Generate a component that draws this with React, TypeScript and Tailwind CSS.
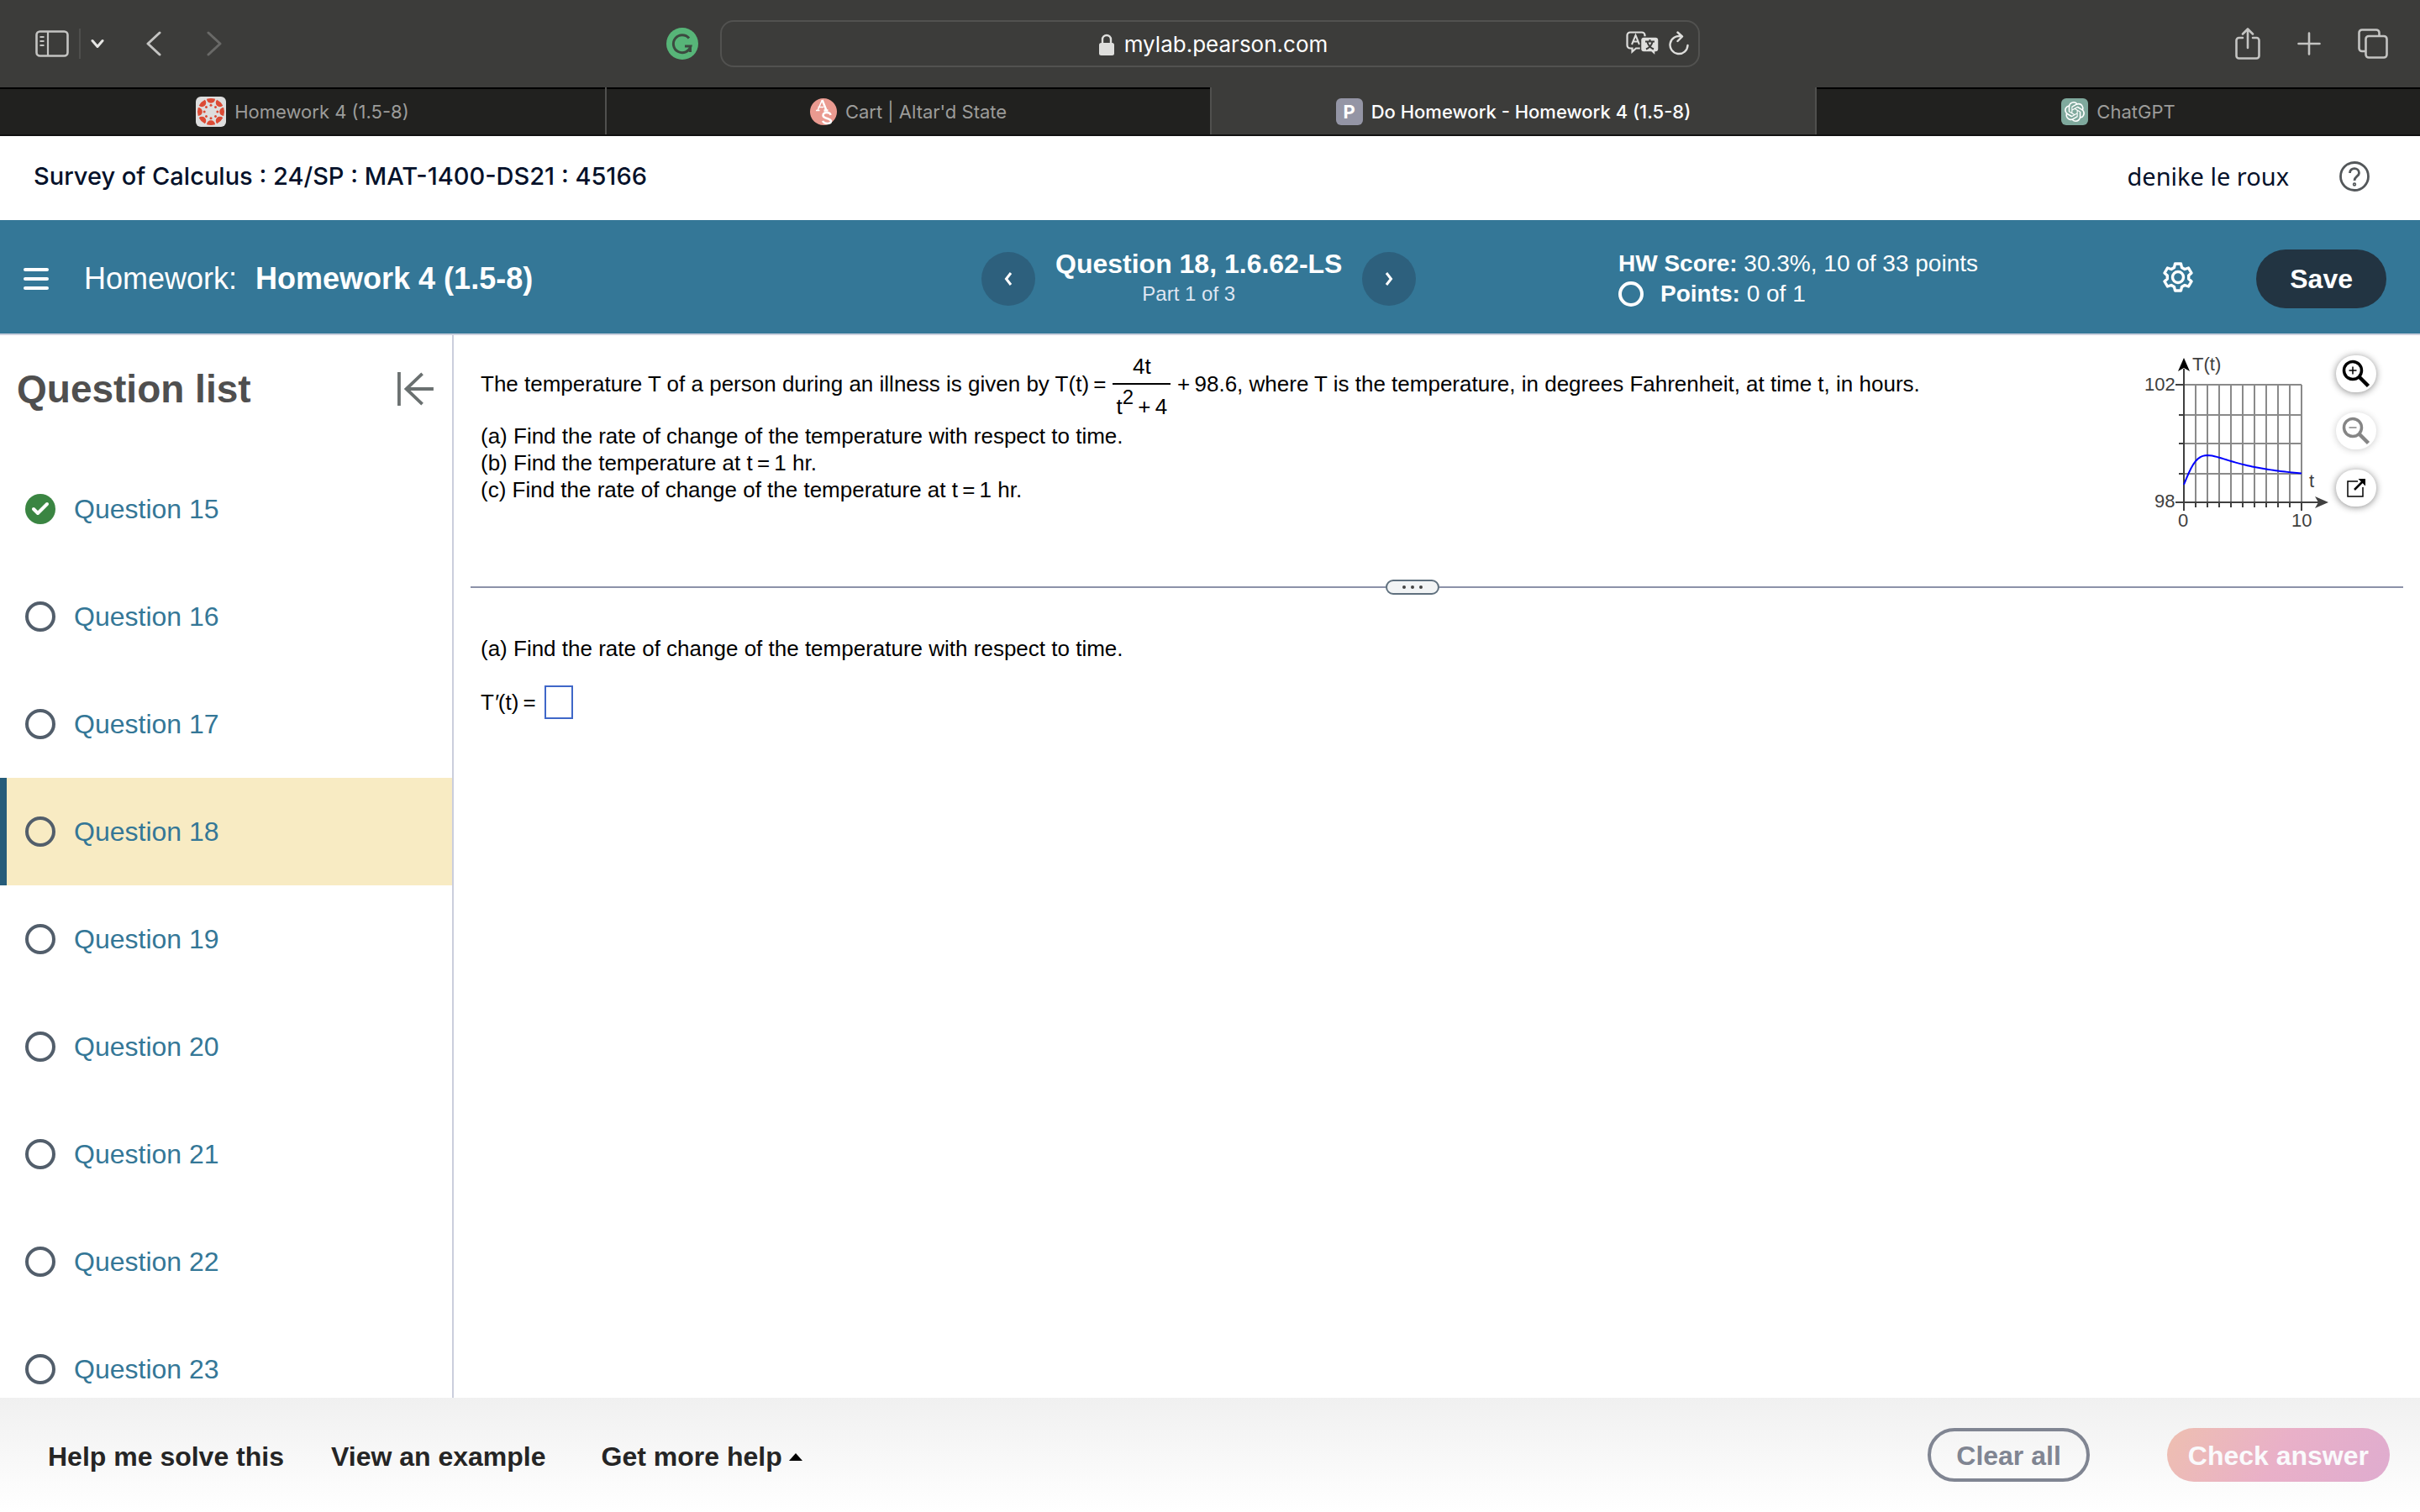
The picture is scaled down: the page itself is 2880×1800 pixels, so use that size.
import { useState } from "react";
import type { ReactNode } from "react";
import { Check } from "lucide-react";
import { SiOpenai } from "react-icons/si";

const questions = [15, 16, 17, 18, 19, 20, 21, 22, 23];

const CanvasIcon = () => (
  <svg viewBox="0 0 36 36" className="h-9 w-9">
    <rect width="36" height="36" rx="6" fill="#dedede" />
    {[0, 45, 90, 135, 180, 225, 270, 315].map((angle) => (
      <g key={angle} transform={`rotate(${angle} 18 18)`} fill="#dc4b35">
        <path d="M13 2.8a16 16 0 0 1 10 0a5 5 0 0 1-10 0z" />
        <circle cx="18" cy="10.2" r="1.5" />
      </g>
    ))}
  </svg>
);

const AltarIcon = () => (
  <svg viewBox="0 0 32 32" className="h-8 w-8">
    <circle cx="16" cy="16" r="16" fill="#ea9a90" />
    <path d="M7 14.500h4.500M9 14.500L14.500 2M9.500 10.500h6.500" fill="none" stroke="#fff" strokeWidth="1.500" />
    <path d="M14.500 2l5 12.500M16.500 14.500h5" fill="none" stroke="#fff" strokeWidth="2.500" />
    <path d="M24.500 20c-.5-3.500-9-4.500-9 .5 0 4 9.500 3 9.500 7 0 3.500-8 3.500-10-.5" fill="none" stroke="#fff" strokeWidth="2.500" />
  </svg>
);

const PearsonIcon = () => (
  <span className="flex h-8 w-8 items-center justify-center rounded-md bg-[#9495a5] text-[22px] leading-8 font-bold text-white">P</span>
);

const ChatIcon = () => (
  <span className="flex h-8 w-8 items-center justify-center rounded-md bg-[#7fa99d]">
    <SiOpenai className="h-6 w-6 text-white" />
  </span>
);

const tabs: { title: string; icon: ReactNode; active?: boolean }[] = [
  { title: "Homework 4 (1.5-8)", icon: <CanvasIcon /> },
  { title: "Cart | Altar'd State", icon: <AltarIcon /> },
  { title: "Do Homework - Homework 4 (1.5-8)", icon: <PearsonIcon />, active: true },
  { title: "ChatGPT", icon: <ChatIcon /> },
];

const BrowserToolbar = () => (
  <div className="grid h-[104px] shrink-0 grid-cols-[1fr_1166px_1fr] items-center bg-[#3c3c3a] text-[#c4c4c2]">
    <div className="flex items-center pl-[42px]">
      <button aria-label="Show sidebar">
        <svg viewBox="0 0 40 32" className="h-8 w-10" fill="none" stroke="currentColor" strokeWidth="2.6">
          <rect x="1.500" y="1.500" width="37" height="29" rx="4" />
          <path d="M15 2v28M5.500 8h5M5.500 13h5M5.500 18h5" strokeWidth="2.200" />
        </svg>
      </button>
      <span className="ml-3 h-9 w-0.5 bg-[#4f4f4d]" />
      <button aria-label="Tab groups" className="ml-3">
        <svg viewBox="0 0 16 12" className="h-3 w-4" fill="none" stroke="#e6e6e4" strokeWidth="3" strokeLinecap="round" strokeLinejoin="round">
          <path d="M2 2.500l6 7 6-7" />
        </svg>
      </button>
      <button aria-label="Back" className="ml-[50px]">
        <svg viewBox="0 0 18 30" className="h-[30px] w-[18px]" fill="none" stroke="currentColor" strokeWidth="3" strokeLinecap="round" strokeLinejoin="round">
          <path d="M16 2L2 15l14 13" />
        </svg>
      </button>
      <button aria-label="Forward" className="ml-[54px] text-[#696967]">
        <svg viewBox="0 0 18 30" className="h-[30px] w-[18px]" fill="none" stroke="currentColor" strokeWidth="3" strokeLinecap="round" strokeLinejoin="round">
          <path d="M2 2l14 13L2 28" />
        </svg>
      </button>
      <button aria-label="Grammarly" className="mr-[26px] ml-auto">
        <svg viewBox="0 0 38 38" className="h-[38px] w-[38px]">
          <circle cx="19" cy="19" r="19" fill="#57b578" />
          <path d="M27 12.500a10.500 10.500 0 1 0 2 9.500h-7M28.500 21.500v7.500" fill="none" stroke="#3c4a40" strokeWidth="3" />
        </svg>
      </button>
    </div>
    <div className="flex h-14 items-center rounded-2xl border-2 border-[#525250] px-2.5">
      <div className="flex flex-1 items-center justify-center gap-3 pt-0.5 pl-[84px]">
        <svg viewBox="0 0 18 26" className="h-[26px] w-[18px]" fill="#dededc">
          <rect y="11" width="18" height="15" rx="2.500" />
          <path d="M4 12V7a5 5 0 0 1 10 0v5" fill="none" stroke="#dededc" strokeWidth="2.400" />
        </svg>
        <span className="text-[26px] leading-8 text-white">mylab.pearson.com</span>
      </div>
      <button aria-label="Translate">
        <svg viewBox="0 0 40 30" className="h-[30px] w-10">
          <path
            d="M5 1.500h14a3.500 3.500 0 0 1 3.500 3.500v12a3.500 3.500 0 0 1-3.500 3.500h-7l-4.500 4v-4H5A3.500 3.500 0 0 1 1.500 17V5A3.500 3.500 0 0 1 5 1.500z"
            fill="none"
            stroke="#dededc"
            strokeWidth="2.200"
          />
          <path d="M7 16L11.500 5 16 16M8.500 12.500h6" fill="none" stroke="#dededc" strokeWidth="2" />
          <path
            d="M21 7h14.500A3.500 3.500 0 0 1 39 10.500v11a3.500 3.500 0 0 1-3.500 3.500H35v4.500L30 25h-9a3.500 3.500 0 0 1-3.500-3.500v-11A3.500 3.500 0 0 1 21 7z"
            fill="#dededc"
            stroke="#3c3c3a"
            strokeWidth="1.500"
          />
          <path d="M23 12.500h11M28.500 10v2.500M31.500 13c-1 4-4 7-7.500 8.500M25.500 13c1 4 4 7 7.500 8.500" fill="none" stroke="#3c3c3a" strokeWidth="2" />
        </svg>
      </button>
      <button aria-label="Reload" className="ml-2.5">
        <svg viewBox="0 0 26 30" className="h-[30px] w-[26px]" fill="none" stroke="#dededc" strokeWidth="2.400" strokeLinecap="round" strokeLinejoin="round">
          <path d="M16 6.500A10.500 10.500 0 1 0 23.500 17M11.500 1.500l5.500 5-5.500 5.500" />
        </svg>
      </button>
    </div>
    <div className="flex items-center justify-end gap-11 pr-[38px]">
      <button aria-label="Share">
        <svg viewBox="0 0 30 38" className="h-[38px] w-[30px]" fill="none" stroke="currentColor" strokeWidth="2.600" strokeLinecap="round" strokeLinejoin="round">
          <path d="M9 12H4.500A3 3 0 0 0 1.500 15v18.500a3 3 0 0 0 3 3h21a3 3 0 0 0 3-3V15a3 3 0 0 0-3-3H21M15 24V2M9 7.500L15 1.500l6 6" />
        </svg>
      </button>
      <button aria-label="New tab">
        <svg viewBox="0 0 28 28" className="h-7 w-7" fill="none" stroke="currentColor" strokeWidth="2.600" strokeLinecap="round">
          <path d="M14 1.500v25M1.500 14h25" />
        </svg>
      </button>
      <button aria-label="Tab overview">
        <svg viewBox="0 0 36 36" className="h-9 w-9" fill="none" stroke="currentColor" strokeWidth="2.600">
          <path d="M9.500 27H5a3.500 3.500 0 0 1-3.500-3.500V5A3.500 3.500 0 0 1 5 1.500h17A3.500 3.500 0 0 1 25.500 5v4" />
          <rect x="9.500" y="9" width="25" height="25.500" rx="3.500" />
        </svg>
      </button>
    </div>
  </div>
);

const TabBar = () => (
  <div className="grid h-[58px] shrink-0 grid-cols-4 border-b-2 border-[#111]">
    {tabs.map((tab) => (
      <button
        key={tab.title}
        className={`flex items-center justify-center gap-2.5 border-l-2 border-[#50504e] pt-0.5 text-[22px] leading-7 first:border-l-0 ${
          tab.active ? "bg-[#3c3c3a] font-medium text-white" : "bg-[#21211f] text-[#9c9c9a] shadow-[inset_0_2px_0_#000]"
        }`}
      >
        {tab.icon}
        {tab.title}
      </button>
    ))}
  </div>
);

const CourseHeader = () => (
  <header className="flex h-[100px] shrink-0 items-center justify-between bg-white pr-[60px] pb-1 pl-10 text-[#05112a]">
    <h1 className="text-[29px] leading-9 font-medium">Survey of Calculus : 24/SP : MAT-1400-DS21 : 45166</h1>
    <div className="flex items-center gap-[60px]">
      <span className="font-['Noto_Sans',sans-serif] text-[29px] leading-9">denike le roux</span>
      <button aria-label="Help">
        <svg viewBox="0 0 36 36" className="h-9 w-9" fill="none" stroke="#53575a" strokeWidth="2.800">
          <circle cx="18" cy="18" r="16.500" />
          <path d="M12.500 14c0-7.500 11-7 11 0 0 4-5.500 4-5.500 9" />
          <circle cx="18" cy="27.500" r="0.800" />
        </svg>
      </button>
    </div>
  </header>
);

const RoundButton = ({ label, d }: { label: string; d: string }) => (
  <button aria-label={label} className="flex h-16 w-16 items-center justify-center rounded-full bg-[#2d607d]">
    <svg viewBox="0 0 10 16" className="h-4 w-2.5" fill="none" stroke="#fff" strokeWidth="3">
      <path d={d} />
    </svg>
  </button>
);

const AssignmentBar = () => (
  <div className="grid h-[137px] shrink-0 grid-cols-[1168fr_758fr_648fr_306fr] items-center border-b-2 border-[#cbd0de] bg-[#347797] pt-1 font-['Liberation_Sans',Arial,sans-serif] text-white">
    <div className="flex items-center pl-7">
      <button aria-label="Menu" className="flex flex-col gap-[7px]">
        <span className="h-1 w-[30px] rounded-sm bg-white" />
        <span className="h-1 w-[30px] rounded-sm bg-white" />
        <span className="h-1 w-[30px] rounded-sm bg-white" />
      </button>
      <span className="ml-[42px] text-[36px] leading-10">Homework:</span>
      <span className="ml-[22px] text-[36px] leading-10 font-bold">Homework 4 (1.5-8)</span>
    </div>
    <div className="flex items-center gap-6">
      <RoundButton label="Previous question" d="M8 1L2.500 8 8 15" />
      <div className="pb-1 text-center">
        <div className="text-[32px] leading-10 font-bold">Question 18, 1.6.62-LS</div>
        <div className="pr-6 text-2xl leading-8 text-[#dfe6f2]">Part 1 of 3</div>
      </div>
      <RoundButton label="Next question" d="M2 1l5.500 7L2 15" />
    </div>
    <div className="text-[28px] leading-9">
      <div>
        <b>HW Score:</b> 30.3%, 10 of 33 points
      </div>
      <div className="flex items-center gap-5">
        <span className="h-[30px] w-[30px] rounded-full border-4 border-white" />
        <span>
          <b>Points:</b> 0 of 1
        </span>
      </div>
    </div>
    <div className="flex items-center justify-between pr-10">
      <button aria-label="Settings" className="pb-1">
        <svg viewBox="0 0 36 36" className="h-9 w-9" fill="none" stroke="#fff" strokeWidth="3.400" strokeLinejoin="round">
          <path d="M14.500 2h7l1 4.500 3.500 2 4.500-1.500 3.500 6-3.300 3v4l3.300 3-3.500 6-4.500-1.500-3.500 2-1 4.500h-7l-1-4.500-3.500-2L5.500 29 2 23l3.300-3v-4L2 13l3.500-6L10 8.500l3.500-2z" />
          <circle cx="18" cy="18" r="6.500" />
        </svg>
      </button>
      <button className="h-[70px] rounded-full bg-[#223442] px-10 text-[32px] leading-10 font-bold">Save</button>
    </div>
  </div>
);

const QuestionList = ({ active, onSelect }: { active: number; onSelect: (question: number) => void }) => (
  <aside className="w-[540px] shrink-0 overflow-hidden border-r-2 border-[#cbcedd]">
    <div className="flex h-[143px] items-start justify-between pt-10 pr-[22px] pl-5">
      <h2 className="text-[46px] leading-[48px] font-bold text-[#4f4f4f]">Question list</h2>
      <button aria-label="Collapse question list" className="pt-1">
        <svg viewBox="0 0 46 42" className="h-10 w-11" fill="none" stroke="#6a7070" strokeWidth="4">
          <path d="M3 0v42M46 21H13M32 2L12 21l20 19" />
        </svg>
      </button>
    </div>
    <ul>
      {questions.map((question) => (
        <li key={question}>
          <button
            onClick={() => onSelect(question)}
            className={`flex h-32 w-full items-center gap-[22px] border-l-8 pl-[22px] text-[32px] leading-10 text-[#347797] ${
              question === active ? "border-[#265c7a] bg-[#f8ebc3]" : "border-transparent"
            }`}
          >
            {question === 15 ? (
              <span className="flex h-9 w-9 items-center justify-center rounded-full bg-[#3a8542]">
                <Check className="h-6 w-6 text-white" strokeWidth={4} />
              </span>
            ) : (
              <span className="h-9 w-9 rounded-full border-4 border-[#525e6b]" />
            )}
            Question {question}
          </button>
        </li>
      ))}
    </ul>
  </aside>
);

const TemperatureGraph = () => {
  const points = Array.from({ length: 51 }, (_, i) => {
    const t = i / 5;
    const temp = (4 * t) / (t * t + 4) + 98.6;
    return `${49 + t * 14},${179 - (temp - 98) * 35}`;
  }).join(" ");

  return (
    <svg viewBox="0 0 224 220" className="h-[220px] w-56 font-['Liberation_Sans',Arial,sans-serif] text-[22px]" fill="#404040">
      <g stroke="#8a8a8a" strokeWidth="2">
        {[1, 2, 3, 4, 5, 6, 7, 8, 9, 10].map((x) => (
          <path key={x} d={`M${49 + x * 14} 39v140`} />
        ))}
        {[39, 75, 109, 145].map((y) => (
          <path key={y} d={`M49 ${y}h140`} />
        ))}
      </g>
      <g stroke="#404040" strokeWidth="2">
        {[1, 2, 3, 4, 5, 6, 7, 8, 9].map((x) => (
          <path key={x} d={`M${49 + x * 14} 179v6`} />
        ))}
        {[75, 109, 145].map((y) => (
          <path key={y} d={`M43 ${y}h6`} />
        ))}
        <path d="M39 39h10M39 179h170M49 189V20M189 179v10" />
      </g>
      <path d="M49 7l7 16-7-4-7 4z" fill="#000" />
      <path d="M221 179l-16 7 4-7-4-7z" />
      <polyline points={points} fill="none" stroke="#0000ff" strokeWidth="2" />
      <text x="59" y="22">T(t)</text>
      <text x="2" y="46">102</text>
      <text x="14" y="185">98</text>
      <text x="42" y="208">0</text>
      <text x="177" y="208">10</text>
      <text x="198" y="161">t</text>
    </svg>
  );
};

const GraphTools = () => (
  <div className="flex flex-col gap-6 pt-1">
    {["Zoom in", "Zoom out"].map((label) => (
      <button
        key={label}
        aria-label={label}
        className={`flex h-11 w-12 items-center justify-center rounded-full bg-white ${
          label === "Zoom in" ? "text-black shadow-[0_1px_8px_#0007]" : "text-[#858585] shadow-[0_1px_8px_#0003]"
        }`}
      >
        <svg viewBox="0 0 34 34" className="h-[34px] w-[34px]" fill="none" stroke="currentColor" strokeWidth="3.500">
          <circle cx="13" cy="13" r="10.500" />
          <path d="M21 21l10.500 10.500" strokeWidth="4.500" />
          <path d={label === "Zoom in" ? "M8.500 13h9M13 8.500v9" : "M8.500 13h9"} strokeWidth="1.500" />
        </svg>
      </button>
    ))}
    <button aria-label="Open in new window" className="flex h-11 w-12 items-center justify-center rounded-full bg-white shadow-[0_1px_8px_#0007]">
      <svg viewBox="0 0 24 24" className="h-6 w-6" fill="none" stroke="#000" strokeWidth="1.500">
        <path d="M14 4H2v18h18V11" />
        <path d="M10 14L20 4" strokeWidth="2.500" />
        <path d="M14.500 1H23v8.500z" fill="#000" stroke="none" />
      </svg>
    </button>
  </div>
);

const Problem = () => (
  <main className="min-w-0 flex-1 px-5 pt-4 text-[26px] leading-8 text-black">
    <div className="flex h-[275px] justify-between">
      <div className="pl-3">
        <div className="mb-1 flex h-[84px] items-center">
          <span>The temperature T of a person during an illness is given by T(t)&thinsp;=</span>
          <span className="mx-2 inline-flex flex-col items-center">
            <span className="h-9 leading-8">4t</span>
            <span className="h-0.5 w-full bg-black" />
            <span className="h-9 px-1 leading-[52px]">
              t<sup className="text-2xl leading-none">2</sup>&thinsp;+&thinsp;4
            </span>
          </span>
          <span>+&thinsp;98.6, where T is the temperature, in degrees Fahrenheit, at time t, in hours.</span>
        </div>
        <p>(a) Find the rate of change of the temperature with respect to time.</p>
        <p>(b) Find the temperature at t&thinsp;=&thinsp;1 hr.</p>
        <p>(c) Find the rate of change of the temperature at t&thinsp;=&thinsp;1 hr.</p>
      </div>
      <div className="flex gap-1.5 pt-1 pr-8">
        <TemperatureGraph />
        <GraphTools />
      </div>
    </div>
    <div className="flex h-[18px] items-center">
      <span className="h-0.5 grow-19 bg-[#8c92a8]" />
      <button aria-label="Resize panes" className="flex h-[18px] w-16 items-center justify-center gap-1.5 rounded-full border-2 border-[#5f707e] bg-[#f2f4f5]">
        <span className="h-1 w-1 rounded-full bg-[#444]" />
        <span className="h-1 w-1 rounded-full bg-[#444]" />
        <span className="h-1 w-1 rounded-full bg-[#444]" />
      </button>
      <span className="h-0.5 grow-20 bg-[#8c92a8]" />
    </div>
    <div className="pt-12 pl-3">
      <p>(a) Find the rate of change of the temperature with respect to time.</p>
      <label className="mt-7 flex items-center gap-2.5">
        <span>
          T<i>&prime;</i>(t)&thinsp;=
        </span>
        <input type="text" className="h-10 w-[34px] border-2 border-[#3f67c8] outline-none" />
      </label>
    </div>
  </main>
);

const Footer = () => (
  <footer className="flex h-[136px] shrink-0 items-center justify-between bg-linear-to-b from-[#f0f0f0] to-white pr-9 pl-[57px] font-['Liberation_Sans',Arial,sans-serif] text-[32px] leading-10 font-bold text-[#252525]">
    <div className="flex items-center pt-1">
      <button>Help me solve this</button>
      <button className="ml-14">View an example</button>
      <button className="ml-[66px] flex items-center gap-2">
        Get more help
        <svg viewBox="0 0 16 9" className="h-[9px] w-4" fill="#000">
          <path d="M8 0l8 9H0z" />
        </svg>
      </button>
    </div>
    <div className="flex items-center gap-[92px]">
      <button className="h-16 rounded-full border-4 border-[#808592] px-[30px] pt-0.5 text-[#808592]">Clear all</button>
      <button className="h-16 rounded-full bg-linear-120 from-[#eebfb0] via-[#e9b0c8] to-[#dfaccf] px-[25px] pt-0.5 text-[#fafafc]">Check answer</button>
    </div>
  </footer>
);

const App = () => {
  const [activeQuestion, setActiveQuestion] = useState(18);

  return (
    <div className="flex h-screen flex-col bg-white font-['Inter',sans-serif]">
      <BrowserToolbar />
      <TabBar />
      <CourseHeader />
      <AssignmentBar />
      <div className="flex min-h-0 flex-1 font-['Liberation_Sans',Arial,sans-serif]">
        <QuestionList active={activeQuestion} onSelect={setActiveQuestion} />
        <Problem />
      </div>
      <Footer />
    </div>
  );
};

export default App;
